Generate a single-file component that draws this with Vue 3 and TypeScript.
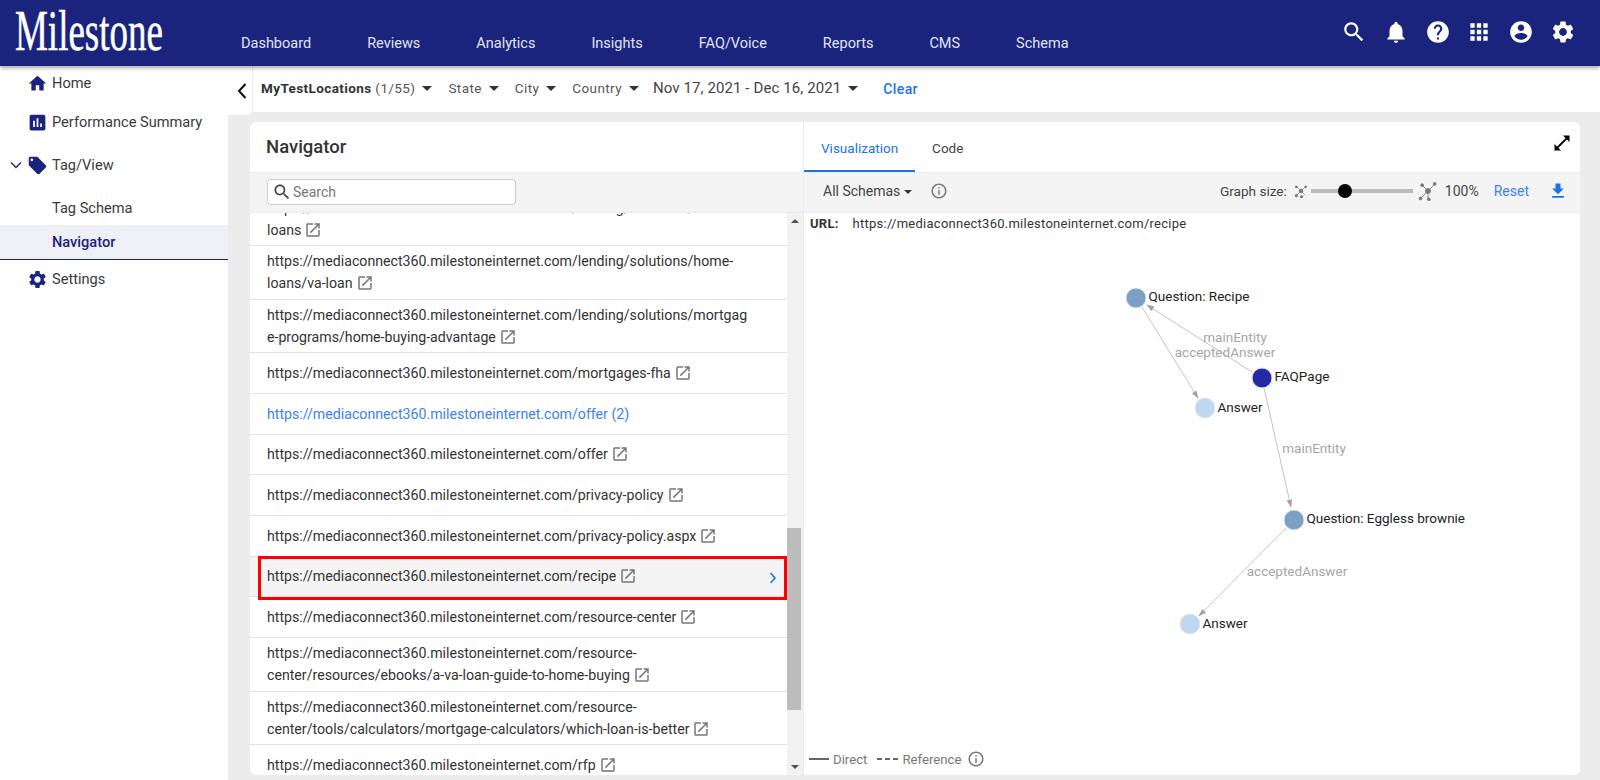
<script setup lang="ts">
interface Row {
  lines: string[];
  link?: boolean;
  selected?: boolean;
}

const base = 'https://mediaconnect360.milestoneinternet.com';

const icons = {
  search: 'M15.5 14h-.79l-.28-.27C15.41 12.59 16 11.11 16 9.5 16 5.91 13.09 3 9.5 3S3 5.91 3 9.5 5.91 16 9.5 16c1.61 0 3.09-.59 4.23-1.57l.27.28v.79l5 4.99L20.49 19l-4.99-5zm-6 0C7.01 14 5 11.99 5 9.5S7.01 5 9.5 5 14 7.01 14 9.5 11.99 14 9.5 14z',
  bell: 'M12 22c1.1 0 2-.9 2-2h-4c0 1.1.89 2 2 2zm6-6v-5c0-3.07-1.64-5.64-4.5-6.32V4c0-.83-.67-1.5-1.5-1.5s-1.5.67-1.5 1.5v.68C7.63 5.36 6 7.92 6 11v5l-2 2v1h16v-1l-2-2z',
  help: 'M12 2C6.48 2 2 6.48 2 12s4.48 10 10 10 10-4.48 10-10S17.52 2 12 2zm1 17h-2v-2h2v2zm2.07-7.75l-.9.92C13.45 12.9 13 13.5 13 15h-2v-.5c0-1.1.45-2.1 1.17-2.83l1.24-1.26c.37-.36.59-.86.59-1.41 0-1.1-.9-2-2-2s-2 .9-2 2H8c0-2.21 1.79-4 4-4s4 1.79 4 4c0 .88-.36 1.68-.93 2.25z',
  apps: 'M4 8h4V4H4v4zm6 12h4v-4h-4v4zm-6 0h4v-4H4v4zm0-6h4v-4H4v4zm6 0h4v-4h-4v4zm6-10v4h4V4h-4zm-6 4h4V4h-4v4zm6 6h4v-4h-4v4zm0 6h4v-4h-4v4z',
  account: 'M12 2C6.48 2 2 6.48 2 12s4.48 10 10 10 10-4.48 10-10S17.52 2 12 2zm0 3c1.66 0 3 1.34 3 3s-1.34 3-3 3-3-1.34-3-3 1.34-3 3-3zm0 14.2c-2.5 0-4.71-1.28-6-3.22.03-1.99 4-3.08 6-3.08 1.99 0 5.97 1.09 6 3.08-1.29 1.94-3.5 3.22-6 3.22z',
  settings: 'M19.14 12.94c.04-.3.06-.61.06-.94 0-.32-.02-.64-.07-.94l2.03-1.58c.18-.14.23-.41.12-.61l-1.92-3.32c-.12-.22-.37-.29-.59-.22l-2.39.96c-.5-.38-1.03-.7-1.62-.94l-.36-2.54c-.04-.24-.24-.41-.48-.41h-3.84c-.24 0-.43.17-.47.41l-.36 2.54c-.59.24-1.13.57-1.62.94l-2.39-.96c-.22-.08-.47 0-.59.22L2.74 8.87c-.12.21-.08.47.12.61l2.03 1.58c-.05.3-.09.63-.09.94s.02.64.07.94l-2.03 1.58c-.18.14-.23.41-.12.61l1.92 3.32c.12.22.37.29.59.22l2.39-.96c.5.38 1.03.7 1.62.94l.36 2.54c.05.24.24.41.48.41h3.84c.24 0 .44-.17.47-.41l.36-2.54c.59-.24 1.13-.56 1.62-.94l2.39.96c.22.08.47 0 .59-.22l1.92-3.32c.12-.22.07-.47-.12-.61l-2.01-1.58zM12 15.6c-1.98 0-3.6-1.62-3.6-3.6s1.62-3.6 3.6-3.6 3.6 1.62 3.6 3.6-1.62 3.6-3.6 3.6z',
  home: 'M10 20v-6h4v6h5v-8h3L12 3 2 12h3v8z',
  chart: 'M19 3H5c-1.1 0-2 .9-2 2v14c0 1.1.9 2 2 2h14c1.1 0 2-.9 2-2V5c0-1.1-.9-2-2-2zM9 17H7v-7h2v7zm4 0h-2V7h2v10zm4 0h-2v-4h2v4z',
  tag: 'M21.41 11.58l-9-9C12.05 2.22 11.55 2 11 2H4c-1.1 0-2 .9-2 2v7c0 .55.22 1.05.59 1.42l9 9c.36.36.86.58 1.41.58.55 0 1.05-.22 1.41-.59l7-7c.37-.36.59-.86.59-1.41 0-.55-.23-1.06-.59-1.42zM5.5 7C4.67 7 4 6.33 4 5.5S4.67 4 5.5 4 7 4.67 7 5.5 6.33 7 5.5 7z',
  open: 'M19 19H5V5h7V3H5c-1.11 0-2 .9-2 2v14c0 1.1.89 2 2 2h14c1.1 0 2-.9 2-2v-7h-2v7zM14 3v2h3.59l-9.83 9.83 1.41 1.41L19 6.41V10h2V3h-7z',
  info: 'M11 7h2v2h-2zm0 4h2v6h-2zm1-9C6.48 2 2 6.48 2 12s4.48 10 10 10 10-4.48 10-10S17.52 2 12 2zm0 18c-4.41 0-8-3.59-8-8s3.59-8 8-8 8 3.59 8 8-3.59 8-8 8z',
  download: 'M19 9h-4V3H9v6H5l7 7 7-7zM5 18v2h14v-2H5z',
};

const navLinks = ['Dashboard', 'Reviews', 'Analytics', 'Insights', 'FAQ/Voice', 'Reports', 'CMS', 'Schema'];
const headerIcons = [icons.search, icons.bell, icons.help, icons.apps, icons.account, icons.settings];

const rows: Row[] = [
  { lines: [`${base}/lending/solutions/home-`, 'loans'] },
  { lines: [`${base}/lending/solutions/home-`, 'loans/va-loan'] },
  { lines: [`${base}/lending/solutions/mortgag`, 'e-programs/home-buying-advantage'] },
  { lines: [`${base}/mortgages-fha`] },
  { lines: [`${base}/offer (2)`], link: true },
  { lines: [`${base}/offer`] },
  { lines: [`${base}/privacy-policy`] },
  { lines: [`${base}/privacy-policy.aspx`] },
  { lines: [`${base}/recipe`], selected: true },
  { lines: [`${base}/resource-center`] },
  { lines: [`${base}/resource-`, 'center/resources/ebooks/a-va-loan-guide-to-home-buying'] },
  { lines: [`${base}/resource-`, 'center/tools/calculators/mortgage-calculators/which-loan-is-better'] },
  { lines: [`${base}/rfp`] },
];

// graph uses page coordinates, the viewBox lines them up with the canvas
const edges = [
  { x1: 1252, y1: 372, x2: 1147, y2: 305 },
  { x1: 1142, y1: 307, x2: 1198, y2: 398 },
  { x1: 1264, y1: 388, x2: 1291, y2: 507 },
  { x1: 1286, y1: 528, x2: 1199, y2: 616 },
];
const edgeLabels = [
  { x: 1235, y: 342, text: 'mainEntity' },
  { x: 1225, y: 357, text: 'acceptedAnswer' },
  { x: 1314, y: 453, text: 'mainEntity' },
  { x: 1297, y: 576, text: 'acceptedAnswer' },
];
const nodes = [
  { x: 1136, y: 298, ly: 301, fill: '#7c9fc4', text: 'Question: Recipe' },
  { x: 1262, y: 378, ly: 381, fill: '#2429a8', text: 'FAQPage' },
  { x: 1205, y: 408, ly: 412, fill: '#bfd8f0', text: 'Answer' },
  { x: 1294, y: 520, ly: 523, fill: '#7c9fc4', text: 'Question: Eggless brownie' },
  { x: 1190, y: 624, ly: 628, fill: '#bfd8f0', text: 'Answer' },
];
</script>

<template>
  <div class="page">
    <header class="topbar">
      <div class="brand"><span class="logo">Milestone</span></div>
      <nav class="nav">
        <a v-for="link in navLinks" :key="link">{{ link }}</a>
      </nav>
      <div class="top-icons">
        <svg v-for="icon in headerIcons" :key="icon" viewBox="0 0 24 24"><path :d="icon" /></svg>
      </div>
    </header>

    <div class="main">
      <aside class="sidebar">
        <div class="side-item home">
          <svg viewBox="0 0 24 24"><path :d="icons.home" /></svg>
          <span>Home</span>
        </div>
        <div class="side-item perf">
          <svg viewBox="0 0 24 24"><path :d="icons.chart" /></svg>
          <span>Performance Summary</span>
        </div>
        <div class="side-item tagview">
          <svg class="chev" viewBox="0 0 12 8"><path d="M1 1.5l5 5 5-5" /></svg>
          <svg viewBox="0 0 24 24"><path :d="icons.tag" /></svg>
          <span>Tag/View</span>
        </div>
        <div class="side-sub">Tag Schema</div>
        <div class="side-sub active">Navigator</div>
        <div class="side-item settings">
          <svg viewBox="0 0 24 24"><path :d="icons.settings" /></svg>
          <span>Settings</span>
        </div>
      </aside>

      <section class="content">
        <div class="filters">
          <div class="collapse-tab">
            <svg viewBox="0 0 12 18"><path d="M9.5 2L3 9l6.5 7" /></svg>
          </div>
          <span class="filter loc"><b>MyTestLocations</b> (1/55)</span><i class="caret" />
          <span class="filter">State</span><i class="caret" />
          <span class="filter">City</span><i class="caret" />
          <span class="filter">Country</span><i class="caret" />
          <span class="filter date">Nov 17, 2021 - Dec 16, 2021</span><i class="caret" />
          <a class="clear">Clear</a>
        </div>

        <div class="card-wrap">
          <div class="card">
            <div class="left">
              <div class="card-head"><h2>Navigator</h2></div>
              <div class="tools">
                <div class="search">
                  <svg viewBox="0 0 24 24"><path :d="icons.search" /></svg>
                  <span>Search</span>
                </div>
              </div>
              <div class="list-wrap">
                <div class="list">
                  <div
                    v-for="(row, i) in rows"
                    :key="i"
                    class="row"
                    :class="{ selected: row.selected }"
                  >
                    <div class="row-text" :class="{ link: row.link }">
                      <div v-for="(line, n) in row.lines" :key="n" class="line">
                        {{ line }}<svg
                          v-if="n === row.lines.length - 1 && !row.link"
                          class="open"
                          viewBox="0 0 24 24"
                        ><path :d="icons.open" /></svg>
                      </div>
                    </div>
                    <svg v-if="row.selected" class="row-chev" viewBox="0 0 8 12"><path d="M1.5 1l4.5 5-4.5 5" /></svg>
                    <div v-if="row.selected" class="red-box" />
                  </div>
                </div>
                <div class="scrollbar">
                  <i class="arrow up" />
                  <div class="track"><div class="thumb" /></div>
                  <i class="arrow down" />
                </div>
              </div>
            </div>

            <div class="right">
              <div class="card-head tabs">
                <a class="tab on">Visualization</a>
                <a class="tab">Code</a>
                <svg class="expand" viewBox="0 0 16 16">
                  <path d="M2.5 13.5l11-11" />
                  <path class="fill" d="M9 0.5h6.5V7zM0.5 9v6.5H7z" />
                </svg>
              </div>
              <div class="tools graph-tools">
                <span class="schemas">All Schemas</span><i class="caret small" />
                <svg class="info" viewBox="0 0 24 24"><path :d="icons.info" /></svg>
                <span class="spacer" />
                <span class="graph-label">Graph size:</span>
                <svg class="net small-net" viewBox="0 0 24 24">
                  <path d="M5 5l14 14M19 5L5 19" />
                  <circle cx="12" cy="12" r="3.4" /><circle cx="4" cy="5" r="1.8" /><circle cx="20" cy="5" r="1.8" />
                  <circle cx="4" cy="20" r="2.2" /><circle cx="13" cy="22" r="2.2" />
                </svg>
                <div class="slider"><div class="knob" /></div>
                <svg class="net big-net" viewBox="0 0 24 24">
                  <path d="M4 20L20 4M6 6l6 6M12 12v9" />
                  <circle cx="12" cy="12" r="3" /><circle cx="5" cy="5" r="1.7" /><circle cx="20" cy="3.5" r="1.7" />
                  <circle cx="3" cy="21" r="1.7" /><circle cx="13" cy="22" r="1.7" />
                </svg>
                <span class="pct">100%</span>
                <a class="reset">Reset</a>
                <svg class="dl" viewBox="0 0 24 24"><path :d="icons.download" /></svg>
              </div>
              <div class="graph-body">
                <div class="url"><b>URL:</b><span>{{ base }}/recipe</span></div>
                <svg class="graph" viewBox="804 213 776 562">
                  <defs>
                    <marker id="tip" viewBox="0 0 10 10" refX="9" refY="5" markerWidth="8" markerHeight="8" orient="auto">
                      <path d="M0 1.5L10 5 0 8.5z" fill="#a3a3a3" />
                    </marker>
                  </defs>
                  <line
                    v-for="(e, i) in edges"
                    :key="i"
                    :x1="e.x1" :y1="e.y1" :x2="e.x2" :y2="e.y2"
                    stroke="#c4c4c4"
                    marker-end="url(#tip)"
                  />
                  <text v-for="(l, i) in edgeLabels" :key="i" class="edge-label" :x="l.x" :y="l.y">{{ l.text }}</text>
                  <g v-for="(n, i) in nodes" :key="i">
                    <circle :cx="n.x" :cy="n.y" r="10" :fill="n.fill" stroke="#dfe8f3" />
                    <text class="node-label" :x="n.x + 12.5" :y="n.ly">{{ n.text }}</text>
                  </g>
                </svg>
                <div class="legend">
                  <i class="solid" /><span>Direct</span>
                  <i class="dashed" /><span>Reference</span>
                  <svg viewBox="0 0 24 24"><path :d="icons.info" /></svg>
                </div>
              </div>
            </div>
          </div>
        </div>
      </section>
    </div>
  </div>
</template>

<style>
body {
  background: #ececec;
}
</style>

<style scoped>
.page {
  height: 780px;
  overflow: hidden;
  display: flex;
  flex-direction: column;
  font-family: Roboto, "Liberation Sans", sans-serif;
  color: #333;
  background: #ececec;
}

.topbar {
  height: 66px;
  flex: none;
  display: flex;
  background: #1a247d;
  box-shadow: 0 2px 4px rgba(0, 0, 0, 0.35);
  position: relative;
  z-index: 3;
}

.brand {
  width: 241px;
  flex: none;
  overflow: hidden;
  padding: 0 0 0 15px;
  box-sizing: border-box;
}

.logo {
  display: block;
  font-family: "Liberation Serif", serif;
  font-size: 56px;
  line-height: 62px;
  color: #fff;
  -webkit-text-stroke: 0.5px #fff;
  transform: scaleX(0.66);
  transform-origin: left;
  white-space: nowrap;
}

.nav {
  display: flex;
  gap: 56px;
  padding-top: 35px;
  font-size: 14.5px;
  line-height: 18px;
  color: #e1e4f3;
}

.top-icons {
  margin-left: auto;
  padding: 19px 24px 0 0;
  display: flex;
  gap: 15.8px;
}

.top-icons svg {
  width: 26px;
  height: 26px;
  fill: #fff;
}

.main {
  flex: 1;
  min-height: 0;
  display: flex;
}

.sidebar {
  width: 228px;
  flex: none;
  background: #fff;
  font-size: 14.6px;
  line-height: 20px;
  color: #3a3a3a;
}

.side-item {
  display: flex;
  align-items: center;
  gap: 4px;
  padding-left: 27px;
  height: 20px;
  position: relative;
}

.side-item svg {
  width: 21px;
  height: 21px;
  fill: #1a247d;
  flex: none;
}

.side-item.home {
  margin-top: 7px;
}

.side-item.perf {
  margin-top: 19px;
}

.side-item.tagview {
  margin-top: 23px;
}

.side-item svg.chev {
  position: absolute;
  left: 10px;
  top: 6px;
  width: 12px;
  height: 8px;
  fill: none;
  stroke: #1a247d;
  stroke-width: 1.4;
}

.side-sub {
  padding-left: 52px;
  margin-top: 23px;
}

.side-sub.active {
  margin-top: 7px;
  height: 35px;
  box-sizing: border-box;
  line-height: 34px;
  background: #efeff6;
  border-bottom: 1px solid #1a247d;
  color: #1a247d;
  font-weight: 500;
  margin-bottom: 9px;
}

.content {
  flex: 1;
  min-width: 0;
  display: flex;
  flex-direction: column;
}

.filters {
  height: 46px;
  flex: none;
  display: flex;
  align-items: center;
  padding: 0 0 2px 33px;
  box-sizing: border-box;
  background: #fff;
  position: relative;
  font-size: 13.5px;
  letter-spacing: 0.4px;
  color: #555;
}

.collapse-tab {
  position: absolute;
  left: 0;
  top: 0;
  width: 25px;
  height: 50px;
  background: #fff;
  border: 1px solid #ececec;
  border-width: 0 1px 1px 0;
  border-radius: 0 0 6px 0;
  box-sizing: border-box;
  z-index: 1;
  display: flex;
  align-items: center;
  justify-content: center;
  padding-left: 3px;
}

.collapse-tab svg {
  width: 12px;
  height: 18px;
  fill: none;
  stroke: #111;
  stroke-width: 2;
}

.filter {
  white-space: nowrap;
}

.filter.loc b {
  font-weight: 700;
  color: #333;
}

.filter.date {
  margin-left: -2px;
  font-size: 15px;
  letter-spacing: 0.1px;
  color: #444;
}

.caret {
  display: block;
  width: 0;
  height: 0;
  border: 5px solid transparent;
  border-top: 5px solid #333;
  border-bottom: 0;
  margin: 1px 16px 0 7px;
}

.caret.small {
  border-width: 4px 4px 0;
  margin: 1px 0 0 4px;
}

.clear {
  margin-left: 9px;
  color: #1a73e8;
  font-size: 14px;
  font-weight: 500;
  padding-top: 2px;
}

.card-wrap {
  flex: 1;
  min-height: 0;
  padding: 10px 20px 5px 22px;
}

.card {
  height: 100%;
  background: #fff;
  border-radius: 6px;
  overflow: hidden;
  display: flex;
}

.left {
  width: 554px;
  flex: none;
  display: flex;
  flex-direction: column;
  border-right: 1px solid #ececec;
  box-sizing: border-box;
}

.right {
  flex: 1;
  min-width: 0;
  display: flex;
  flex-direction: column;
}

.card-head {
  height: 50px;
  flex: none;
  display: flex;
  align-items: center;
  padding-left: 16px;
  box-sizing: border-box;
}

.card-head h2 {
  margin: 0;
  font-size: 18.5px;
  font-weight: 500;
  color: #333;
}

.tools {
  height: 41px;
  flex: none;
  display: flex;
  align-items: center;
  background: #f4f4f4;
  border-top: 1px solid #ececec;
  border-bottom: 1px solid #ececec;
  box-sizing: border-box;
  padding-left: 17px;
  padding-bottom: 1px;
}

.search {
  width: 249px;
  height: 26px;
  box-sizing: border-box;
  display: flex;
  align-items: center;
  gap: 1px;
  padding-left: 4px;
  background: #fff;
  border: 1px solid #ccc;
  border-radius: 4px;
  font-size: 14px;
  color: #777;
}

.search svg {
  width: 20px;
  height: 20px;
  fill: #444;
}

.list-wrap {
  flex: 1;
  min-height: 0;
  display: flex;
}

.list {
  flex: 1;
  min-width: 0;
  overflow: hidden;
}

.row {
  position: relative;
  min-height: 40.7px;
  box-sizing: border-box;
  display: flex;
  align-items: center;
  padding: 4.3px 17px;
  border-bottom: 1px solid #e2e2e2;
  font-size: 14.17px;
  line-height: 22px;
  color: #333;
}

.row:first-child {
  margin-top: -20.6px;
}

.row.selected {
  background: #f4f4f4;
}

.row-text.link {
  color: #3b82f0;
}

.line {
  white-space: nowrap;
}

.open {
  width: 18px;
  height: 18px;
  margin-left: 3px;
  vertical-align: -4px;
  fill: #777;
}

.row-chev {
  position: absolute;
  right: 10px;
  top: 15px;
  width: 8px;
  height: 12px;
  fill: none;
  stroke: #1a73e8;
  stroke-width: 1.6;
}

.red-box {
  position: absolute;
  left: 8px;
  right: 0;
  top: -1px;
  bottom: -4px;
  border: 3px solid #f00;
}

.scrollbar {
  width: 16px;
  flex: none;
  background: #f1f1f1;
  display: flex;
  flex-direction: column;
  align-items: center;
}

.track {
  flex: 1;
  width: 100%;
  padding-top: 299px;
  box-sizing: border-box;
}

.thumb {
  width: 14px;
  height: 182px;
  background: #bcbcbc;
}

.arrow {
  display: block;
  width: 0;
  height: 0;
  flex: none;
  border: 4px solid transparent;
}

.arrow.up {
  border-bottom: 4px solid #505050;
  border-top: 0;
  margin: 6px 0;
}

.arrow.down {
  border-top: 4px solid #505050;
  border-bottom: 0;
  margin: 6px 0;
}

.tabs {
  padding-left: 0;
  position: relative;
  font-size: 13.5px;
}

.tab {
  height: 50px;
  box-sizing: border-box;
  line-height: 52px;
  padding: 0 17px;
  color: #444;
}

.tab.on {
  color: #1a73e8;
  border-bottom: 2px solid #1a73e8;
}

.expand {
  position: absolute;
  right: 10px;
  top: 13px;
  width: 16px;
  height: 16px;
  fill: none;
  stroke: #000;
  stroke-width: 1.8;
}

.expand .fill {
  fill: #000;
  stroke: none;
}

.graph-tools {
  padding: 0 13px 3px 19px;
  font-size: 14px;
  color: #444;
}

.schemas {
  white-space: nowrap;
}

.graph-label {
  font-size: 13.6px;
}

.info {
  width: 18px;
  height: 18px;
  margin-left: 18px;
  fill: #777;
}

.spacer {
  flex: 1;
}

.net {
  flex: none;
  fill: #777;
  stroke: #777;
  stroke-width: 1;
}

.small-net {
  width: 14px;
  height: 14px;
  margin: 0 3px 0 7px;
}

.big-net {
  width: 20px;
  height: 20px;
  margin: 0 7px 0 5px;
}

.slider {
  width: 102px;
  height: 4px;
  background: #bcbcbc;
  position: relative;
}

.knob {
  position: absolute;
  left: 27px;
  top: -5px;
  width: 14px;
  height: 14px;
  border-radius: 50%;
  background: #000;
}

.pct {
  margin-right: 15px;
}

.reset {
  color: #3b82f0;
  margin-right: 19px;
}

.dl {
  width: 20px;
  height: 20px;
  margin-right: -1px;
  fill: #1a73e8;
}

.graph-body {
  flex: 1;
  min-height: 0;
  position: relative;
  display: flex;
  flex-direction: column;
  font-size: 13px;
}

.url {
  padding: 0 0 0 6px;
  height: 21px;
  line-height: 21px;
  display: flex;
  gap: 14px;
  color: #333;
  letter-spacing: 0.25px;
}

.url b {
  font-weight: 700;
}

.graph {
  position: absolute;
  left: 0;
  top: 0;
  width: 776px;
  height: 562px;
}

.edge-label {
  font-size: 13.5px;
  fill: #a6a6a6;
  text-anchor: middle;
}

.node-label {
  font-size: 13.5px;
  fill: #222;
}

.legend {
  margin-top: auto;
  height: 32px;
  display: flex;
  align-items: center;
  padding-left: 5px;
  color: #777;
  font-size: 13.2px;
  position: relative;
}

.legend .solid {
  width: 20px;
  border-top: 2px solid #666;
  margin-right: 4px;
}

.legend .dashed {
  width: 21px;
  height: 2px;
  background: repeating-linear-gradient(90deg, #666 0 5px, transparent 5px 8px);
  margin: 0 4px 0 10px;
}

.legend svg {
  width: 18px;
  height: 18px;
  fill: #777;
  margin-left: 6px;
}
</style>
